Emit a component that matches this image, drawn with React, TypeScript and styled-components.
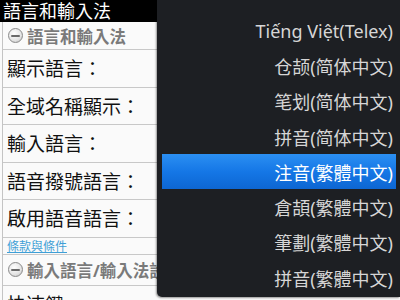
import styled, { createGlobalStyle } from 'styled-components';

const GlobalStyle = createGlobalStyle`
  html, body {
    margin: 0;
    padding: 0;
    background: #fafafa;
    overflow: hidden;
  }
  * {
    box-sizing: border-box;
  }
`;

const FONT = `"Noto Sans", "Noto Sans CJK TC", "DejaVu Sans", sans-serif`;

const Screen = styled.div`
  position: relative;
  width: 400px;
  height: 300px;
  overflow: hidden;
  font-family: ${FONT};
  background: #fafafa;
`;

const TitleBar = styled.div`
  height: 22px;
  background: #000;
  color: #fff;
  font-size: 18px;
  line-height: 22px;
  padding-left: 3px;
`;

const SettingsList = styled.div`
  display: flex;
  flex-direction: column;
  margin-left: 2px;
  border-left: 1px solid #c4c4c4;
  background: #fafafa;
`;

const SectionHeader = styled.div<{ $h: number }>`
  display: flex;
  align-items: center;
  gap: 4px;
  height: ${(p) => p.$h}px;
  padding-left: 5px;
  color: #7a7a7a;
  font-size: 16.5px;
  font-weight: 700;
  border-bottom: 1px solid #c8c8c8;
  white-space: nowrap;
`;

const CollapseIcon = styled.span`
  position: relative;
  display: inline-block;
  width: 15px;
  height: 15px;
  border-radius: 50%;
  border: 1px solid #8a8a8a;
  background: radial-gradient(circle at 40% 35%, #ffffff 0%, #e4e4e4 60%, #b8b8b8 100%);
  flex-shrink: 0;

  &::after {
    content: '';
    position: absolute;
    left: 2px;
    right: 2px;
    top: 5.5px;
    height: 2.5px;
    background: #6a6a6a;
    border-radius: 1px;
  }
`;

const Row = styled.div`
  height: 37.5px;
  display: flex;
  align-items: center;
  padding-left: 4px;
  font-size: 19px;
  color: #111;
  border-bottom: 1px solid #c8c8c8;
  white-space: nowrap;
`;

const LinkRow = styled.div`
  height: 17px;
  display: flex;
  align-items: center;
  padding-left: 4px;
  border-bottom: 1px solid #c8c8c8;
`;

const TermsLink = styled.a`
  font-size: 12px;
  color: #3f9fd6;
  text-decoration: underline;
`;

const Popup = styled.div`
  position: absolute;
  top: 0;
  left: 157px;
  right: 0;
  height: 297px;
  background: #1d1f23;
  border-bottom-left-radius: 5px;
  padding: 13px 4px 0 5px;
  display: flex;
  flex-direction: column;
  box-shadow: -1px 1px 2px rgba(0, 0, 0, 0.4);
`;

const MenuItem = styled.div<{ $selected?: boolean }>`
  height: 35.3px;
  display: flex;
  align-items: center;
  justify-content: flex-end;
  padding-right: 3px;
  font-size: 18px;
  color: ${(p) => (p.$selected ? '#ffffff' : '#d6d6d6')};
  background: ${(p) =>
    p.$selected ? 'linear-gradient(180deg, #2b8ff2 0%, #1577e6 50%, #0d66d2 100%)' : 'transparent'};
  white-space: nowrap;
`;

const rows = ['顯示語言：', '全域名稱顯示：', '輸入語言：', '語音撥號語言：', '啟用語音語言：'];

const methods = [
  'Tiếng Việt(Telex)',
  '仓颉(简体中文)',
  '笔划(简体中文)',
  '拼音(简体中文)',
  '注音(繁體中文)',
  '倉頡(繁體中文)',
  '筆劃(繁體中文)',
  '拼音(繁體中文)',
];

function App() {
  return (
    <>
      <GlobalStyle />
      <Screen>
        <TitleBar>語言和輸入法</TitleBar>
        <SettingsList>
          <SectionHeader $h={28}>
            <CollapseIcon />
            語言和輸入法
          </SectionHeader>
          {rows.map((r) => (
            <Row key={r}>{r}</Row>
          ))}
          <LinkRow>
            <TermsLink>條款與條件</TermsLink>
          </LinkRow>
          <SectionHeader $h={31}>
            <CollapseIcon />
            輸入語言/輸入法設定
          </SectionHeader>
          <Row>快速鍵</Row>
        </SettingsList>
        <Popup>
          {methods.map((m, i) => (
            <MenuItem key={m} $selected={i === 4}>
              {m}
            </MenuItem>
          ))}
        </Popup>
      </Screen>
    </>
  );
}

export default App;
